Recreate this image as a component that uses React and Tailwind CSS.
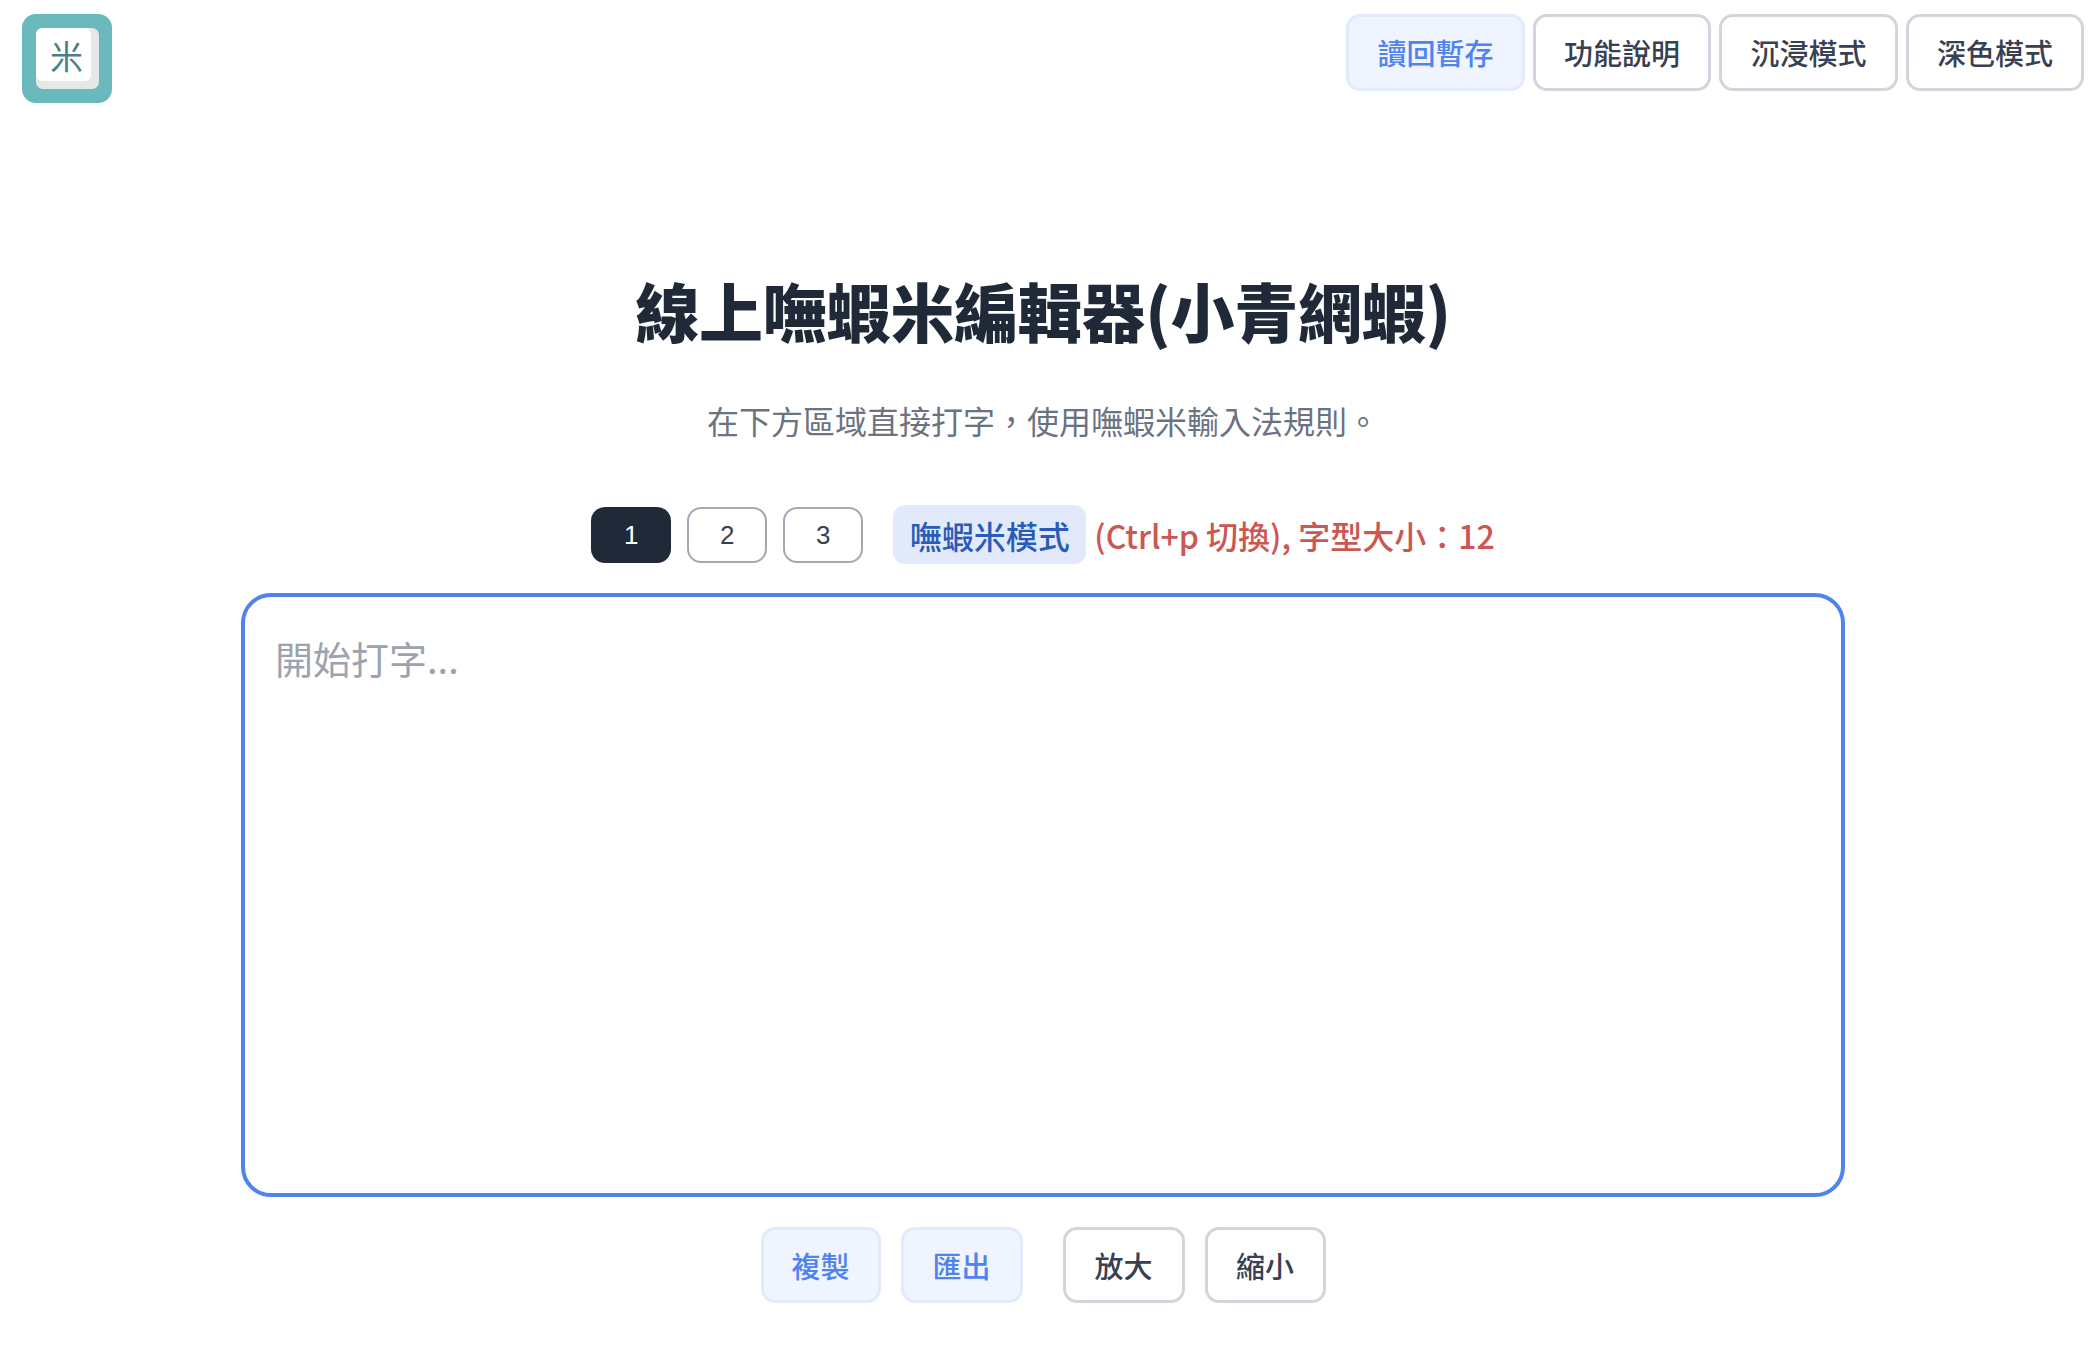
import React from "react";

const topButtons = [
  { label: "功能說明", width: "w-[178px]" },
  { label: "沉浸模式", width: "w-[179px]" },
  { label: "深色模式", width: "w-[178px]" },
];

const Logo = () => (
  <div className="flex h-[89px] w-[90px] items-center justify-center rounded-[14px] bg-[#69b9bd]">
    <div className="h-[61px] w-[63px] rounded-[7px] bg-[#e6e7e7] pb-[8px] pr-[8px]">
      <div className="flex h-full w-full items-center justify-center rounded-[6px] bg-white pl-[7px] pt-[2px] text-[33px] font-normal leading-none text-[#4a8085]">
        米
      </div>
    </div>
  </div>
);

const Button = ({ children, active, className = "" }) => (
  <button
    className={`flex items-center justify-center rounded-[14px] border-[3px] text-[29px] font-medium leading-none ${
      active
        ? "border-[#e2ebfc] bg-[#eff4fe] text-[#4f83ee]"
        : "border-[#d2d5dc] bg-white text-[#374151]"
    } ${className}`}
  >
    {children}
  </button>
);

const PageButton = ({ children, active }) => (
  <button
    className={`flex h-[56px] w-[80px] items-center justify-center rounded-[14px] font-['Liberation_Sans',sans-serif] text-[26px] leading-none ${
      active
        ? "bg-[#1f2937] text-white"
        : "border-2 border-[#a5a8b3] bg-white text-[#374151]"
    }`}
  >
    {children}
  </button>
);

export default function App() {
  return (
    <div className="min-h-screen bg-white pr-[8px] font-['Noto_Sans_CJK_TC','Noto_Sans',sans-serif]">
      <header className="flex items-start justify-between pl-[22px] pr-[2px] pt-[14px]">
        <Logo />
        <div className="flex gap-[8px]">
          <Button active className="h-[77px] w-[179px]">
            讀回暫存
          </Button>
          {topButtons.map((item) => (
            <Button key={item.label} className={`h-[77px] ${item.width}`}>
              {item.label}
            </Button>
          ))}
        </div>
      </header>

      <main className="flex flex-col items-center">
        <h1 className="mt-[166px] text-[64px] font-black leading-[80px] tracking-[-0.25px] text-[#1f2937]">
          線上嘸蝦米編輯器(小青網蝦)
        </h1>
        <p className="mt-[51px] text-[32px] leading-[40px] text-[#6b7280]">
          {"在下方區域直接打字\uFF0C使用嘸蝦米輸入法規則\u3002"}
        </p>

        <div className="mt-[65px] flex items-center">
          <div className="flex gap-[16px]">
            <PageButton active>1</PageButton>
            <PageButton>2</PageButton>
            <PageButton>3</PageButton>
          </div>
          <span className="ml-[30px] flex h-[59px] w-[193px] items-center justify-center rounded-[12px] bg-[#e1e9fb] text-[32px] font-medium leading-none text-[#2a5bb8]">
            嘸蝦米模式
          </span>
          <span className="ml-[8px] text-[32px] font-medium leading-none text-[#cc5652]">
            {"(Ctrl+p 切換), 字型大小\uFF1A12"}
          </span>
        </div>

        <textarea
          className="mt-[29px] h-[604px] w-[1604px] resize-none rounded-[30px] border-4 border-[#4f83ee] bg-white px-[30px] pb-[22px] pt-[31px] text-[38px] leading-[60px] outline-none placeholder:text-[#9ca3af]"
          placeholder="開始打字..."
        />

        <div className="mt-[30px] flex items-center">
          <div className="flex gap-[20px]">
            <Button active className="h-[76px] w-[120px]">
              複製
            </Button>
            <Button active className="h-[76px] w-[122px]">
              匯出
            </Button>
          </div>
          <div className="ml-[40px] flex gap-[20px]">
            <Button className="h-[76px] w-[122px]">放大</Button>
            <Button className="h-[76px] w-[121px]">縮小</Button>
          </div>
        </div>
      </main>
    </div>
  );
}
